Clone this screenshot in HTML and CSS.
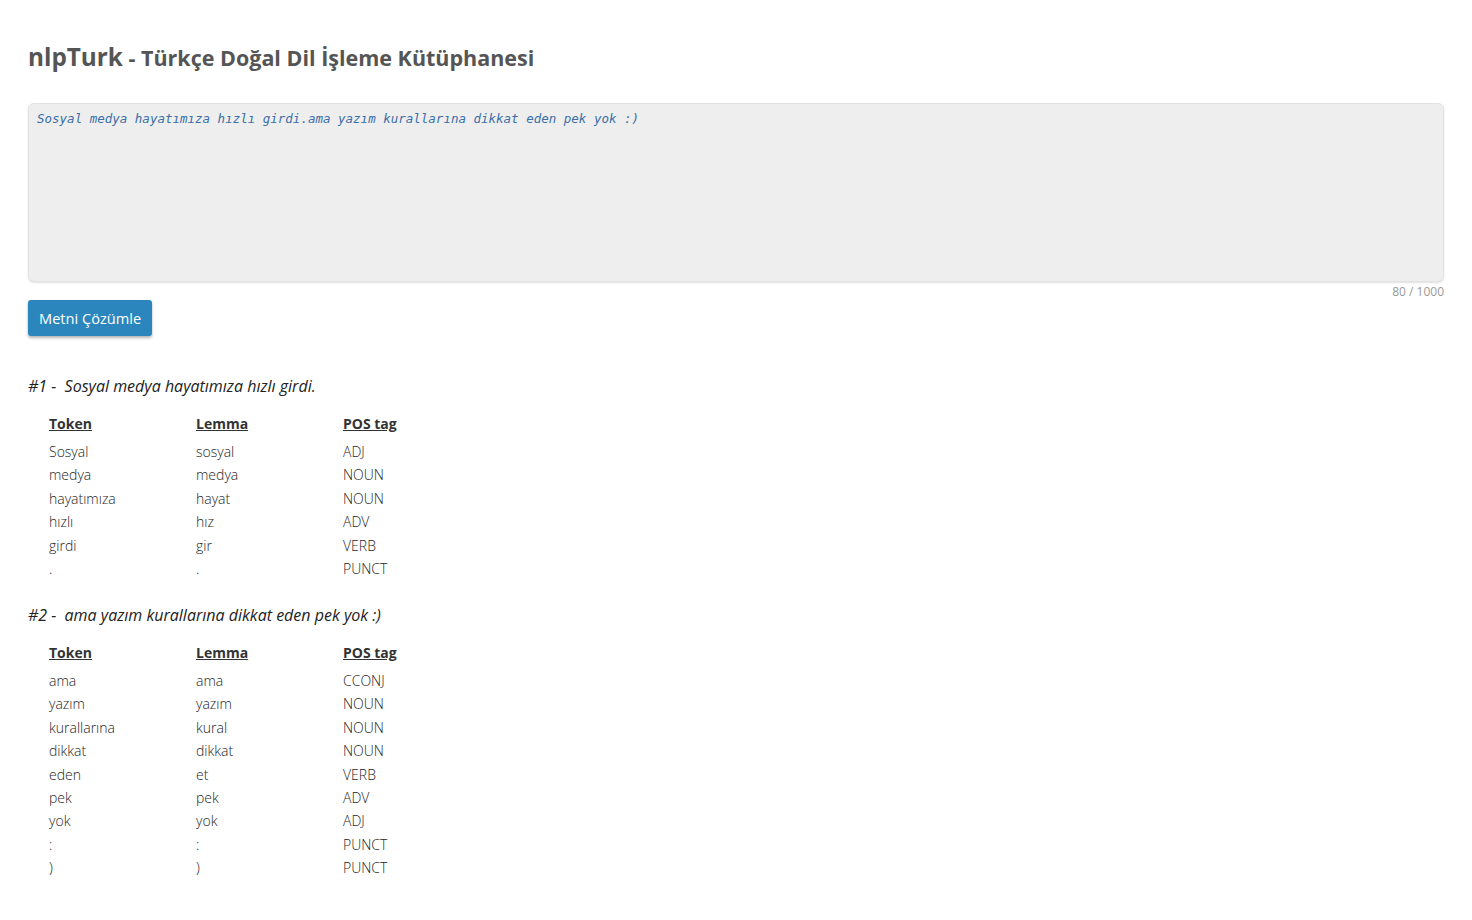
FILE: index.html
```html
<!DOCTYPE html>
<html lang="tr">
<head>
<meta charset="utf-8">
<title>nlpTurk</title>
<link rel="stylesheet" href="styles.css">
</head>
<body>
<div class="page">
  <h1 class="title"><span class="brand">nlpTurk</span> - Türkçe Doğal Dil İşleme Kütüphanesi</h1>
  <div class="input-box">
    <textarea class="text-input">Sosyal medya hayatımıza hızlı girdi.ama yazım kurallarına dikkat eden pek yok :)</textarea>
    <div class="counter">80 / 1000</div>
  </div>
  <button class="btn">Metni Çözümle</button>

  <div class="sentence">
    <p class="sent-title">#1 -&nbsp; Sosyal medya hayatımıza hızlı girdi.</p>
    <table class="tags">
      <thead><tr><th>Token</th><th>Lemma</th><th>POS tag</th></tr></thead>
      <tbody>
        <tr><td>Sosyal</td><td>sosyal</td><td>ADJ</td></tr>
        <tr><td>medya</td><td>medya</td><td>NOUN</td></tr>
        <tr><td>hayatımıza</td><td>hayat</td><td>NOUN</td></tr>
        <tr><td>hızlı</td><td>hız</td><td>ADV</td></tr>
        <tr><td>girdi</td><td>gir</td><td>VERB</td></tr>
        <tr><td>.</td><td>.</td><td>PUNCT</td></tr>
      </tbody>
    </table>
  </div>

  <div class="sentence">
    <p class="sent-title">#2 -&nbsp; ama yazım kurallarına dikkat eden pek yok :)</p>
    <table class="tags">
      <thead><tr><th>Token</th><th>Lemma</th><th>POS tag</th></tr></thead>
      <tbody>
        <tr><td>ama</td><td>ama</td><td>CCONJ</td></tr>
        <tr><td>yazım</td><td>yazım</td><td>NOUN</td></tr>
        <tr><td>kurallarına</td><td>kural</td><td>NOUN</td></tr>
        <tr><td>dikkat</td><td>dikkat</td><td>NOUN</td></tr>
        <tr><td>eden</td><td>et</td><td>VERB</td></tr>
        <tr><td>pek</td><td>pek</td><td>ADV</td></tr>
        <tr><td>yok</td><td>yok</td><td>ADJ</td></tr>
        <tr><td>:</td><td>:</td><td>PUNCT</td></tr>
        <tr><td>)</td><td>)</td><td>PUNCT</td></tr>
      </tbody>
    </table>
  </div>
</div>
</body>
</html>
```
FILE: styles.css
```css
html, body {
  margin: 0;
  padding: 0;
  background: #fff;
}
body {
  font-family: "Open Sans", "Liberation Sans", sans-serif;
  color: #333;
}
.page {
  padding: 37px 28px 20px 28px;
}
.title {
  margin: 0;
  font-size: 21.5px;
  font-weight: 700;
  color: #555;
  line-height: 40px;
}
.brand {
  font-size: 24.3px;
}
.input-box {
  margin-top: 25px;
}
.text-input {
  display: block;
  box-sizing: border-box;
  width: 100%;
  height: 179px;
  resize: none;
  background: #eee;
  border: 1px solid #e2e2e2;
  border-radius: 6px;
  box-shadow: 0 1px 2px rgba(0,0,0,0.12);
  padding: 6px 8px;
  font-family: "DejaVu Sans Mono", monospace;
  font-style: italic;
  font-size: 12.5px;
  line-height: 18px;
  color: #3a6fa8;
  outline: none;
}
.counter {
  text-align: right;
  font-size: 12px;
  color: #999;
  line-height: 18px;
  margin-top: 1px;
}
.btn {
  display: block;
  margin-top: -1px;
  height: 36px;
  padding: 0 11px;
  background: #2a86bd;
  color: #fff;
  border: none;
  border-radius: 3px;
  box-shadow: 0 2px 3px rgba(0,0,0,0.3);
  font-family: "Open Sans", sans-serif;
  font-size: 14.6px;
  cursor: pointer;
}
.sentence {
  margin-top: 38px;
}
.sentence + .sentence {
  margin-top: 22px;
}
.sent-title {
  margin: 0;
  font-style: italic;
  font-size: 16px;
  color: #222;
  line-height: 24px;
}
.tags {
  border-collapse: collapse;
  margin: 14px 0 0 21px;
}
.tags th {
  text-align: left;
  width: 147px;
  padding: 0;
  font-size: 14px;
  font-weight: 700;
  text-decoration: underline;
  color: #333;
  line-height: 24px;
  padding-bottom: 4px;
}
.tags td {
  padding: 0;
  font-size: 14px;
  font-weight: 300;
  color: #1e1e1e;
  line-height: 23.45px;
}
```
